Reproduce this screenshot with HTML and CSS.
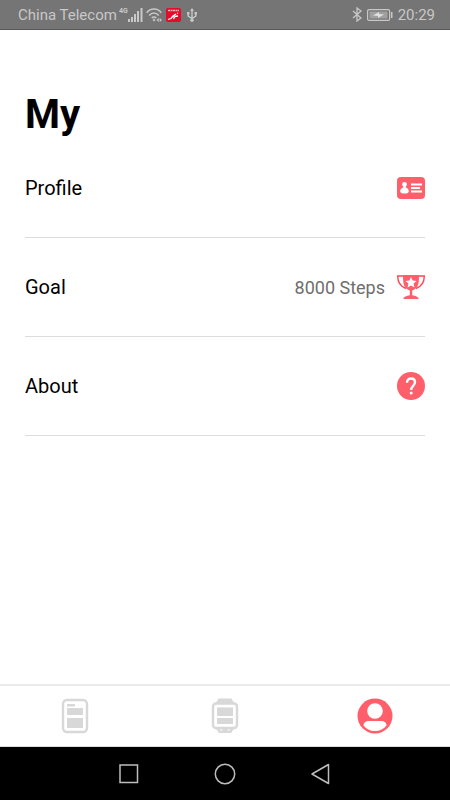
FILE: index.html
```
<!DOCTYPE html>
<html lang="en">
<head>
  <meta charset="UTF-8" />
  <meta name="viewport" content="width=device-width, initial-scale=1.0"/>
  <title>My</title>
  <link rel="stylesheet" href="styles.css">
</head>
<body>
  <header class="status-bar">
    <span class="carrier">China Telecom</span>
    <span class="network">4G</span>
    <svg class="signal" width="15" height="14" viewBox="0 0 15 14" fill="currentColor">
      <path d="M0 11h2v3H0zM3 9h2v5H3zM6 6h2v8H6zM9 3h2v11H9zM12.500 0h2v14h-2z"/>
    </svg>
    <svg class="wifi" width="17" height="14" viewBox="0 0 17 14">
      <path d="M.7 4.800C4.500-.2 11.500-.2 15.300 4.800M3.200 7.500c2.800-3.300 6.800-3.300 9.600 0M5.700 10c1.400-1.500 3.200-1.500 4.600 0" fill="none" stroke="currentColor" stroke-width="1.500"/>
      <path d="M6.500 12L8 10.500 9.500 12 8 13.500zM10.500 12l2.300-2v4zM16 12l-2.300-2v4z" fill="currentColor"/>
    </svg>
    <svg class="app-icon" width="15" height="14" viewBox="0 0 15 14">
      <rect width="15" height="14" rx="2" fill="#e60a2d"/>
      <path d="M2 2.500h11" stroke="#ffb3bd" stroke-width="1.500" stroke-dasharray="2 .5"/>
      <path d="M2 11.500l3-1 2-2.500 3-2M6.500 8l2 1.500-1 1.500M8.500 8.500l3.500-.5M11 5.500l1-.5" fill="none" stroke="#fff" stroke-width="1.300"/>
    </svg>
    <svg class="usb" width="10" height="14" viewBox="0 0 10 14">
      <path d="M5 2v10M1.200 5v3L5 10.500 8.800 8V5" fill="none" stroke="currentColor" stroke-width="1.400"/>
      <path d="M5 0l2 3H3zM0 4h2.500v2.500H0zM7.500 4H10v2.500H7.500z" fill="currentColor"/>
      <circle cx="5" cy="12.300" r="1.700" fill="currentColor"/>
    </svg>
    <div class="status-right">
      <svg width="10" height="15" viewBox="0 0 10 15" fill="none" stroke="currentColor" stroke-width="1.300">
        <path d="M1 4l8 7-4 3V1l4 3-8 7"/>
      </svg>
      <svg width="26" height="12" viewBox="0 0 26 12">
        <rect x=".6" y=".6" width="22" height="10.800" rx="1.500" fill="none" stroke="currentColor" stroke-width="1.200"/>
        <path d="M2.500 2.500h18v7h-18z" fill="#a0a0a0"/>
        <path d="M6 6.500l6-3.500v2l5 .5-6 3.500V7z" fill="#e0e0e0"/>
        <path d="M24 3h1.500v6H24z" fill="currentColor"/>
      </svg>
      <span class="clock">20:29</span>
    </div>
  </header>

  <main class="content">
    <h1>My</h1>
    <button class="row" type="button">
      <span class="row-label">Profile</span>
      <svg width="28" height="28" viewBox="0 0 28 28">
        <rect y="3" width="28" height="22" rx="4" fill="#ff5f6b"/>
        <g fill="#fff">
          <circle cx="7.500" cy="10.300" r="2.400"/>
          <path d="M6.300 11h2.400v2.500c2 .6 3.100 2 3.100 3.700 0 1.500-1.600 2.300-4.300 2.300s-4.300-.8-4.300-2.300c0-1.700 1.100-3.100 3.100-3.700z"/>
          <path d="M14 9.500h11v2H14zM14 13h9v2h-9zM14 16.500h11v2H14z"/>
        </g>
      </svg>
    </button>
    <button class="row" type="button">
      <span class="row-label">Goal</span>
      <span class="row-value">8000 Steps</span>
      <svg width="28" height="28" viewBox="0 0 28 28">
        <path d="M6.500 3H.7c0 7 2.800 10.500 8.300 12.500M21.500 3h5.800c0 7-2.800 10.500-8.300 12.500" fill="none" stroke="#ff4658" stroke-width="1.400"/>
        <path d="M6 2h16c0 9-.5 13-6.800 15.500v4.700c3.500.3 6 1.600 6.600 3.800H6.200c.6-2.200 3.100-3.500 6.600-3.800v-4.700C6.500 15 6 11 6 2z" fill="#ff5f6b"/>
        <path d="M14 4l1.600 3.600 3.900.4-2.900 2.600.8 3.800-3.400-1.900-3.400 1.900.8-3.800L8.500 8l3.900-.4z" fill="#fff"/>
      </svg>
    </button>
    <button class="row" type="button">
      <span class="row-label">About</span>
      <svg width="28" height="28" viewBox="0 0 28 28">
        <circle cx="14" cy="14" r="14" fill="#ff5f6b"/>
        <path d="M10 10.700c0-2.600 1.700-4.200 4-4.200s4 1.500 4 3.800c0 3.300-3.800 3.700-3.800 7.700" fill="none" stroke="#fff" stroke-width="2.400"/>
        <circle cx="14.200" cy="21" r="1.500" fill="#fff"/>
      </svg>
    </button>
  </main>

  <nav class="tab-bar">
    <button class="tab" type="button" aria-label="Home">
      <svg width="36" height="36" viewBox="0 0 36 36">
        <rect x="6" y="2" width="24" height="32" rx="4" fill="none" stroke="currentColor" stroke-width="2.400"/>
        <path d="M10 6h8v2.500h-8zM10 10h16v7H10zM10 20h16v10H10z" fill="currentColor"/>
      </svg>
    </button>
    <button class="tab" type="button" aria-label="Device">
      <svg width="36" height="36" viewBox="0 0 36 36">
        <path d="M9 6V4l1.500-1V2q0-1.500 2-1.500h11q2 0 2 1.500v1L27 4v2zM9.500 30v2l1.500 1v.5q0 1.500 2 1.500h10q2 0 2-1.500V33l1.500-1v-2z" fill="currentColor"/>
        <rect x="6" y="5.500" width="24" height="24.500" rx="3" fill="#fff" stroke="currentColor" stroke-width="2.400"/>
        <path d="M10 9.500h16v8.500H10zM10 20h16v6H10z" fill="currentColor"/>
        <path d="M13 32h2.500M20.500 32H23" stroke="#fff" stroke-width="1"/>
      </svg>
    </button>
    <button class="tab active" type="button" aria-label="My">
      <svg width="36" height="36" viewBox="0 0 36 36">
        <circle cx="18" cy="18" r="17.500" fill="currentColor"/>
        <circle cx="18" cy="13" r="7.800" fill="#fff"/>
        <path d="M12 23h12c3.500 0 5.500 2 5.500 4.500C27 31 23 33 18 33S9 31 6.500 27.500C6.500 25 8.500 23 12 23z" fill="#fff"/>
      </svg>
    </button>
  </nav>

  <footer class="system-nav">
    <button type="button" aria-label="Recent apps">
      <svg width="22" height="22" viewBox="0 0 22 22"><rect x="2" y="2" width="17.500" height="17.500"/></svg>
    </button>
    <button type="button" aria-label="Home screen">
      <svg width="22" height="22" viewBox="0 0 22 22"><circle cx="11" cy="11" r="9.700"/></svg>
    </button>
    <button type="button" aria-label="Back">
      <svg width="22" height="22" viewBox="0 0 22 22"><path d="M18.500 1.500v19L2 11z" stroke-linejoin="round"/></svg>
    </button>
  </footer>
</body>
</html>
```
FILE: styles.css
```
* {
  box-sizing: border-box;
}
body {
  margin: 0;
  min-height: 100vh;
  display: flex;
  flex-direction: column;
  font-family: Roboto, sans-serif;
  background-color: #fff;
  color: #000;
}
button {
  padding: 0;
  border: none;
  background: none;
  font-family: inherit;
  color: inherit;
  cursor: pointer;
}
svg {
  display: block;
  flex-shrink: 0;
}
.status-bar {
  display: flex;
  align-items: center;
  height: 30px;
  padding: 0 15px 0 18px;
  border-bottom: 1px solid #5a5658;
  background-color: #757575;
  color: #c8c8c8;
  font-size: 15px;
}
.network {
  align-self: flex-start;
  margin: 7px 0 0 2px;
  font-size: 7px;
  line-height: 9px;
  font-weight: bold;
}
.wifi {
  margin-left: 3px;
}
.app-icon {
  margin-left: 3px;
}
.usb {
  margin-left: 6px;
}
.status-right {
  display: flex;
  align-items: center;
  gap: 5px;
  margin-left: auto;
}
.content {
  flex: 1;
  padding: 61px 25px 0;
}
h1 {
  margin: 0;
  font-size: 40px;
  line-height: 48px;
}
.row {
  display: flex;
  align-items: center;
  width: 100%;
  height: 99px;
  border-bottom: 1px solid #dcdcdc;
  font-size: 20px;
  text-align: left;
}
.row-label {
  flex: 1;
}
.row-value {
  margin-right: 12px;
  font-size: 18px;
  color: #6e6e6e;
}
.tab-bar {
  display: flex;
  height: 63px;
  border-top: 2px solid #ebebeb;
  border-bottom: 1px solid #dcdcdc;
}
.tab {
  flex: 1;
  display: flex;
  align-items: center;
  justify-content: center;
  color: #d8d8d8;
}
.tab.active {
  color: #ff5f6b;
}
.system-nav {
  display: flex;
  align-items: center;
  justify-content: center;
  gap: 74px;
  height: 53px;
  background-color: #000;
}
.system-nav svg {
  fill: none;
  stroke: #bdbdbd;
  stroke-width: 1.5;
}
```
